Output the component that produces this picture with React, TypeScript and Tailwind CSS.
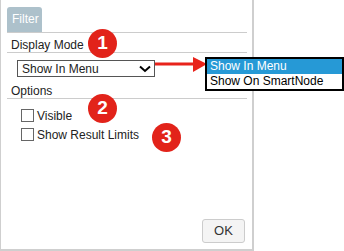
import React from "react";

function Badge({ n, className }: { n: string; className: string }) {
  return (
    <div
      className={
        "absolute w-[29px] h-[29px] rounded-full bg-[#e2231a] text-white font-bold text-[19px] flex items-center justify-center " +
        className
      }
    >
      {n}
    </div>
  );
}

export default function App() {
  return (
    <div
      className="relative w-[344px] h-[251px] bg-white overflow-hidden text-[#222]"
      style={{ fontFamily: '"Liberation Sans", Arial, sans-serif' }}
    >
      <div className="w-[254px] h-[251px] border-l border-r-2 border-b-2 border-[#cfcfcf] pl-[6px] pr-[5px] pt-[7px] flex flex-col">
        <div className="border-b border-[#cccccc] flex">
          <div className="w-[35px] h-[25px] bg-[#adc1cb] rounded-t-[3px] text-white text-[12px] leading-[24px] pl-[5px]">
            Filter
          </div>
        </div>
        <div className="mt-[5px] pl-[4px] text-[12px] leading-[14px] h-[15px] border-b border-[#cccccc]">
          Display Mode
        </div>
        <div className="mt-[7px] ml-[10px] w-[138px] h-[17px] border border-[#555] flex items-center justify-between pl-[4px] pr-[2px] text-[12px] leading-[14px]">
          <span>Show In Menu</span>
          <svg width="12" height="8" viewBox="0 0 12 8" className="mr-[1px]">
            <polyline points="1,1.5 6,6 11,1.5" fill="none" stroke="#000" strokeWidth="2" />
          </svg>
        </div>
        <div className="mt-[7px] pl-[4px] text-[12px] leading-[14px] h-[15px] border-b border-[#cccccc]">
          Options
        </div>
        <div className="mt-[10px] ml-[14px] flex flex-col gap-[6px] text-[12px] leading-[13px]">
          <div className="flex items-center gap-[3px] h-[13px]">
            <div className="w-[13px] h-[13px] border border-[#666] bg-white" />
            <span className="pt-[1px]">Visible</span>
          </div>
          <div className="flex items-center gap-[3px] h-[13px]">
            <div className="w-[13px] h-[13px] border border-[#666] bg-white" />
            <span className="pt-[1px]">Show Result Limits</span>
          </div>
        </div>
        <div className="mt-auto mb-[6px] self-end mr-[2px] w-[43px] h-[24px] bg-[#f4f4f4] border border-[#cccccc] rounded-[3px] flex items-center justify-center text-[13px] text-[#333]">
          OK
        </div>
      </div>

      <svg className="absolute left-[155px] top-[56px]" width="53" height="17" viewBox="0 0 53 17">
        <rect x="0" y="6.5" width="40" height="3" fill="#e8231b" />
        <polygon points="38,1 52,8 38,16" fill="#e8231b" />
      </svg>

      <div className="absolute left-[205px] top-[57px] w-[139px] h-[34px] border-2 border-black bg-white text-[12px] leading-[15px]">
        <div className="bg-[#2699d6] text-white pl-[3px] h-[15px]">Show In Menu</div>
        <div className="text-black pl-[3px] h-[15px]">Show On SmartNode</div>
      </div>

      <Badge n="1" className="left-[88px] top-[29px]" />
      <Badge n="2" className="left-[88px] top-[94px]" />
      <Badge n="3" className="left-[152px] top-[123px]" />
    </div>
  );
}
